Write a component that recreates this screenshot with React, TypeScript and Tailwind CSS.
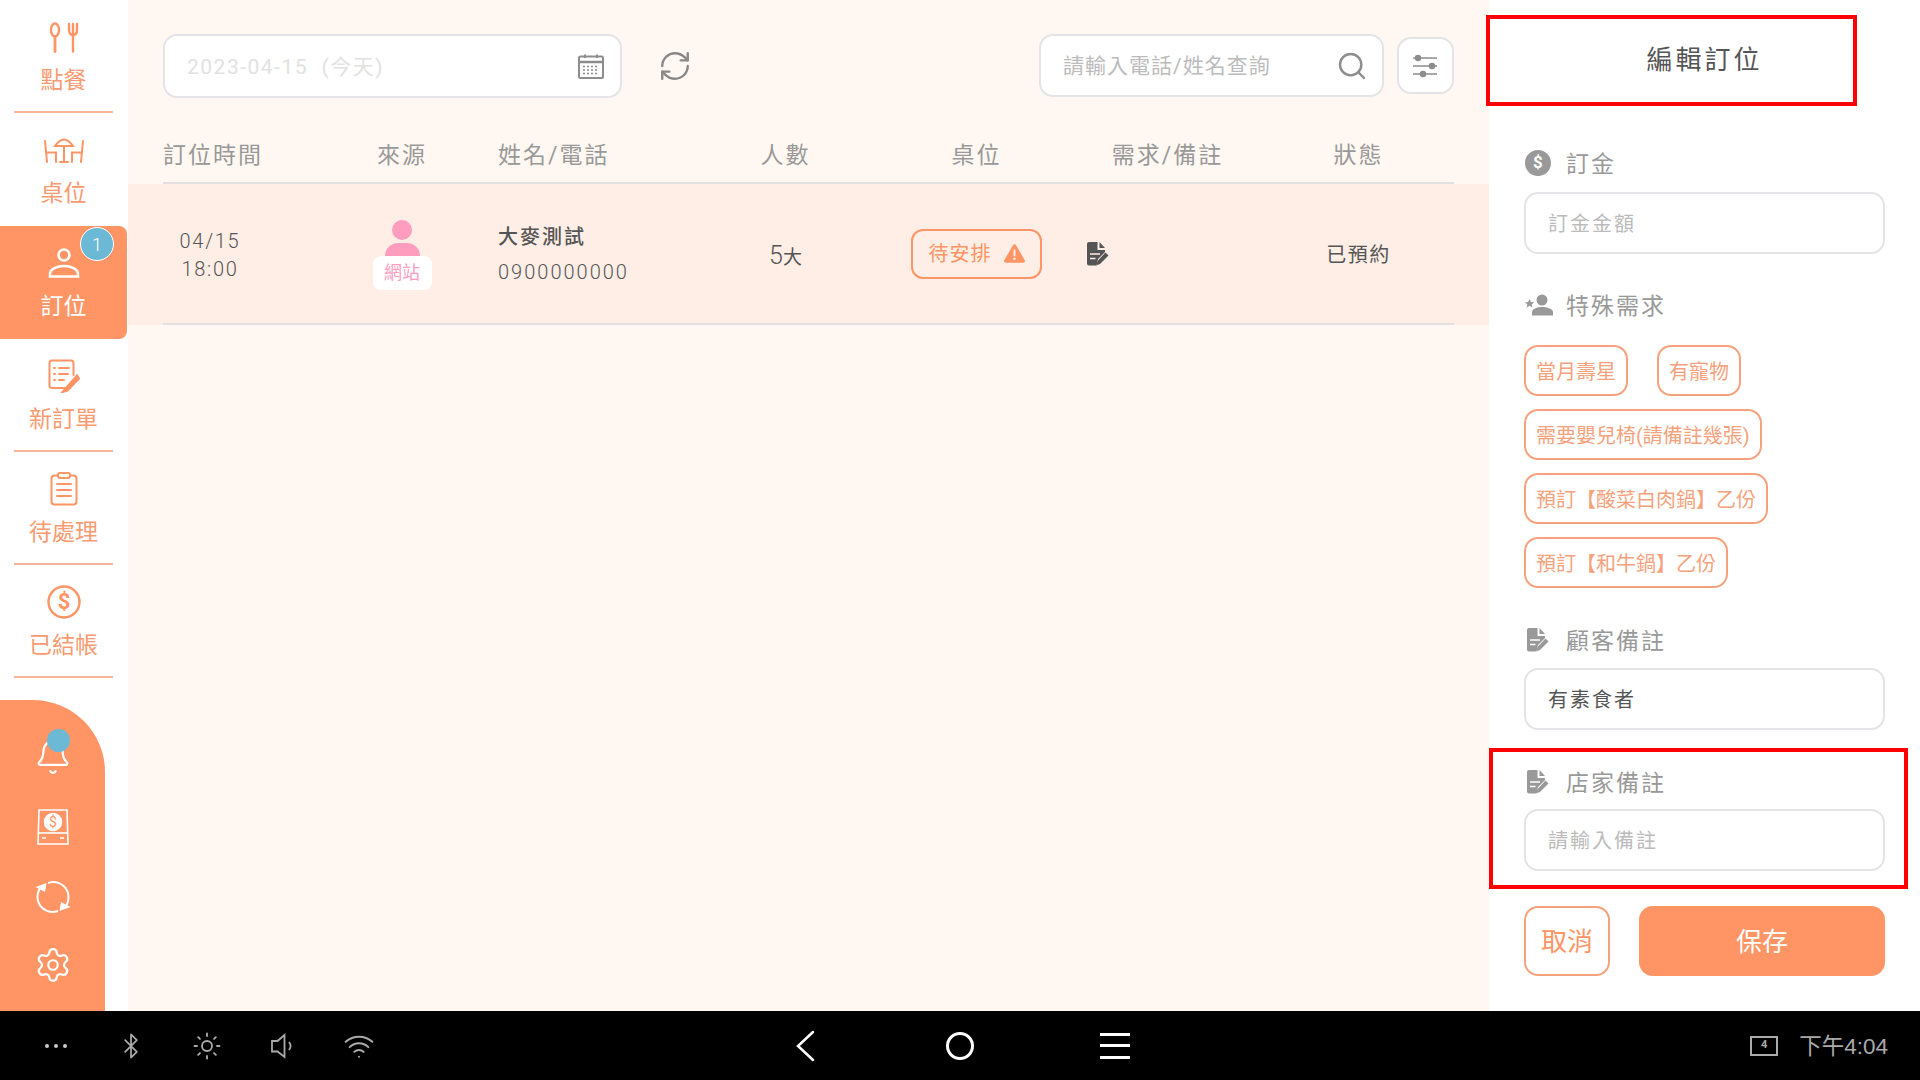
import { Bell, Bluetooth, RefreshCw, Search, Settings, Sun, Wifi } from "lucide-react";
import { FaTriangleExclamation } from "react-icons/fa6";
import type { ReactNode } from "react";

const FONT = "font-['Roboto','Noto_Sans_CJK_TC',sans-serif]";

function ForkSpoonIcon() {
  return (
    <svg width="30" height="31" viewBox="0 0 30 31" fill="none" stroke="#FF9464" strokeWidth="2.4" strokeLinecap="round">
      <ellipse cx="6" cy="8" rx="4" ry="6.5" />
      <path d="M6 14.5V29.5" strokeWidth="2.8" />
      <path d="M20 2V8C20 11 21.5 13 24 13C26.5 13 28 11 28 8V2M24 2V29.5" />
    </svg>
  );
}

function TableIcon() {
  return (
    <svg width="40" height="26" viewBox="0 0 40 26" fill="none" stroke="#FF9464" strokeWidth="2" strokeLinecap="round">
      <path d="M1 4L3 25M2.5 15.500H12V25" />
      <path d="M39 4L37 25M37.500 15.500H28V25" />
      <path d="M11 9Q20 -4 29 9Z" />
      <path d="M20 9V25M16 25H24" />
    </svg>
  );
}

function PersonIcon() {
  return (
    <svg width="32" height="30" viewBox="0 0 32 30" fill="none" stroke="#fff" strokeWidth="2.600">
      <circle cx="16" cy="7" r="5.500" />
      <path d="M2 28.500V26C2 21 9 18 16 18C23 18 30 21 30 26V28.500Z" />
    </svg>
  );
}

function NewOrderIcon() {
  return (
    <svg width="32" height="34" viewBox="0 0 32 34" fill="none" stroke="#FF9464" strokeWidth="2" strokeLinecap="round">
      <path d="M22 29H4C2.500 29 1.500 28 1.500 26.500V4C1.500 2.500 2.500 1.500 4 1.500H23C24.500 1.500 25.500 2.500 25.500 4V16" />
      <path d="M11 9H21M11 15H20M11 21H16" />
      <path d="M6 9H7M6 15H7M6 21H7" />
      <path d="M29 16.500L18 29L14.500 33L19.500 31.500L31 19.500Z" fill="#FF9464" />
    </svg>
  );
}

function ClipboardIcon() {
  return (
    <svg width="28" height="34" viewBox="0 0 28 34" fill="none" stroke="#FF9464" strokeWidth="2" strokeLinecap="round">
      <rect x="1.500" y="3.500" width="25" height="29" rx="3" />
      <rect x="8" y="1" width="12" height="5" rx="2" fill="#fff" />
      <path d="M7 12H21M7 18H21M7 24H21" />
    </svg>
  );
}

function DollarIcon() {
  return (
    <svg width="34" height="34" viewBox="0 0 34 34" fill="none">
      <circle cx="17" cy="17" r="15.500" stroke="#FF9464" strokeWidth="2.400" />
      <text x="17" y="24" textAnchor="middle" fontSize="22" fontWeight="700" fill="#FF9464" fontFamily="Roboto">
        $
      </text>
    </svg>
  );
}

function CashIcon() {
  return (
    <svg width="32" height="36" viewBox="0 0 32 36" fill="none" stroke="#fff" strokeWidth="1.600">
      <path d="M2 1H30L31 35H1Z" />
      <path d="M1 24H31" />
      <path d="M5 29H9M23 29H27" />
      <circle cx="16" cy="13" r="8.500" fill="#fff" />
      <text x="16" y="18" textAnchor="middle" fontSize="14" fill="#FF9464" stroke="none" fontFamily="Roboto">
        $
      </text>
    </svg>
  );
}

function SyncIcon() {
  return (
    <svg width="36" height="34" viewBox="0 0 36 34" fill="none" stroke="#fff" strokeWidth="2">
      <path d="M7 6C4 9 2.500 12.500 2.500 17C2.500 25 9 32 18 32C20 32 21.500 31.500 23 31" />
      <path d="M29 28C32.500 25 33.500 21 33.500 17C33.500 9 27 2 18 2C16 2 14.500 2.500 13 3" />
      <path d="M0.500 7L11.500 3L10 12Z" fill="#fff" stroke="none" />
      <path d="M35.500 27L24.500 31L26 22Z" fill="#fff" stroke="none" />
    </svg>
  );
}

function CalendarIcon() {
  return (
    <svg width="26" height="25" viewBox="0 0 26 25" fill="none" stroke="#8d8d8d" strokeWidth="2">
      <rect x="1" y="2.500" width="24" height="21.500" rx="1.500" />
      <path d="M1 8H25" strokeWidth="2.500" />
      <path d="M7 0.500V4M19 0.500V4" />
      <path d="M5 12.500H21M5 16H21M5 19.500H21" strokeDasharray="2 2" strokeWidth="1.500" />
    </svg>
  );
}

function SlidersIcon() {
  return (
    <svg width="26" height="24" viewBox="0 0 26 24" fill="none" stroke="#8d8d8d" strokeWidth="1.500">
      <path d="M1 4H25M1 12H25M1 20H25" />
      <circle cx="6" cy="4" r="2.500" fill="#8d8d8d" />
      <circle cx="20" cy="12" r="2.500" fill="#8d8d8d" />
      <circle cx="11" cy="20" r="2.500" fill="#8d8d8d" />
    </svg>
  );
}

function StarPersonIcon() {
  return (
    <svg width="28" height="22" viewBox="0 0 28 22" fill="#999">
      <circle cx="17" cy="6" r="5.500" />
      <path d="M7 21.500V18C7 15 12 13 17 13C22 13 28 15 28 18V21.500Z" />
      <path d="M4.500 5L5.900 8L9 8.300L6.700 10.400L7.400 13.500L4.500 11.800L1.600 13.500L2.300 10.400L0 8.300L3.100 8Z" />
    </svg>
  );
}

function NoteIcon({ color, line }: { color: string; line: string }) {
  return (
    <svg width="22" height="24" viewBox="0 0 22 24" fill={color}>
      <path d="M2 0H10.500V8H18V10L11 17L9.500 23.500H2A2 2 0 0 1 0 21.500V2A2 2 0 0 1 2 0Z" />
      <path d="M12.500 0L18 6H12.500Z" />
      <path d="M3 12H13M3 16.500H8.500" fill="none" stroke={line} strokeWidth="1.600" />
      <path d="M18.500 10.500L21.500 13.500L13 22L9.500 23.200L10.500 19Z" />
    </svg>
  );
}

function SpeakerIcon() {
  return (
    <svg className="ml-[49px]" width="24" height="26" viewBox="0 0 24 26" fill="none" stroke="#AAA" strokeWidth="1.800">
      <path d="M1 8H6.500L13.500 2V24L6.500 18.500H1Z" />
      <path d="M18 9C20 11.500 20 14.500 18 17" />
    </svg>
  );
}

function DepositIcon() {
  return (
    <div className="flex h-[26px] w-[26px] items-center justify-center rounded-full bg-[#999] text-[17px] font-bold text-white">
      $
    </div>
  );
}

function NavItem({ icon, label, active, divider }: { icon: ReactNode; label: string; active?: boolean; divider?: boolean }) {
  return (
    <div className={`relative h-[113px] w-[127px] ${active ? "rounded-r-lg bg-[#FF9464]" : ""}`}>
      <div className="flex h-[111px] flex-col items-center pt-[20px]">
        <div className="flex h-[34px] items-center justify-center">{icon}</div>
        <div className={`mt-[10px] text-[23px] leading-[34px] ${active ? "text-white" : "text-[#F99A70]"}`}>{label}</div>
      </div>
      {divider && <div className="mx-[14px] h-[2px] bg-[#F5B69A]" />}
      {active && (
        <div className="absolute left-[80px] top-[1px] flex h-[34px] w-[34px] items-center justify-center rounded-full border border-white bg-[#6CB9D6] text-[18px] font-light text-white">
          1
        </div>
      )}
    </div>
  );
}

function FieldLabel({ icon, text, className }: { icon: ReactNode; text: string; className?: string }) {
  return (
    <div className={`flex h-[30px] items-center ${className ?? ""}`}>
      <div className="flex w-[42px] items-center pl-[1px]">{icon}</div>
      <span className="pt-[4px] text-[23px] tracking-[2px] text-[#999]">{text}</span>
    </div>
  );
}

function Chip({ text }: { text: string }) {
  return (
    <div className="flex h-[51px] items-center rounded-[14px] border-2 border-[#F5A27C] px-[10px] pt-[2px] text-[20px] whitespace-nowrap text-[#F5A27C]">
      {text}
    </div>
  );
}

function Field({ text, filled, className }: { text: string; filled?: boolean; className?: string }) {
  return (
    <div
      className={`flex h-[62px] items-center rounded-[14px] border-2 border-[#E3E4E8] bg-white px-[22px] pt-[2px] text-[20px] tracking-[2px] ${
        filled ? "text-[#555]" : "text-[#BBB]"
      } ${className ?? ""}`}
    >
      {text}
    </div>
  );
}

const GRID = "grid grid-cols-[191px_96px_240px_191px_191px_191px_191px] items-center";

export default function App() {
  return (
    <div className={`relative flex h-[1080px] w-[1920px] flex-col overflow-hidden bg-white ${FONT}`}>
      <div className="flex h-[1011px]">
        {/* left nav */}
        <nav className="flex w-[128px] flex-col bg-white">
          <NavItem icon={<ForkSpoonIcon />} label="點餐" divider />
          <NavItem icon={<TableIcon />} label="桌位" />
          <NavItem icon={<PersonIcon />} label="訂位" active />
          <NavItem icon={<NewOrderIcon />} label="新訂單" divider />
          <NavItem icon={<ClipboardIcon />} label="待處理" divider />
          <NavItem icon={<DollarIcon />} label="已結帳" divider />
          <div className="mt-[22px] flex w-[105px] flex-1 flex-col items-center rounded-tr-[72px] bg-[#FF9464] pt-[22px]">
            <div className="relative flex h-[70px] items-center">
              <Bell size={38} strokeWidth={1.4} color="#fff" />
              <div className="absolute left-[13px] top-[7px] h-[23px] w-[23px] rounded-full bg-[#6CB9D6]" />
            </div>
            <div className="flex h-[70px] items-center">
              <CashIcon />
            </div>
            <div className="flex h-[70px] items-center">
              <SyncIcon />
            </div>
            <div className="flex h-[66px] items-center">
              <Settings size={38} strokeWidth={1.4} color="#fff" />
            </div>
          </div>
        </nav>

        {/* reservations list */}
        <main className="flex-1 bg-[#FFF8F2] px-[35px] pt-[34px]">
          <div className="flex h-[64px] items-start">
            <div className="flex h-[64px] w-[459px] items-center justify-between rounded-[14px] border-2 border-[#E3E4E8] bg-white pl-[22px] pr-[16px]">
              <span className="pt-[3px] text-[21px] tracking-[1.500px] text-[#E2E2E2]">2023-04-15&nbsp; (今天)</span>
              <CalendarIcon />
            </div>
            <div className="ml-[36px] mt-[15px]">
              <RefreshCw size={34} strokeWidth={1.7} color="#888" />
            </div>
            <div className="ml-auto flex h-[63px] w-[345px] items-center justify-between rounded-[14px] border-2 border-[#E3E4E8] bg-white pl-[22px] pr-[14px]">
              <span className="pt-[3px] text-[21px] tracking-[1px] text-[#BBB]">請輸入電話/姓名查詢</span>
              <Search size={32} strokeWidth={1.8} color="#8d8d8d" />
            </div>
            <div className="ml-[13px] mt-[3px] flex h-[57px] w-[57px] items-center justify-center rounded-[14px] border-2 border-[#E3E4E8] bg-white pr-[1px]">
              <SlidersIcon />
            </div>
          </div>

          <div className={`${GRID} h-[86px] border-b-2 border-[#E3E0E4] pt-[33px] text-[23px] tracking-[2px] text-[#999]`}>
            <div>訂位時間</div>
            <div className="text-center">來源</div>
            <div className="pl-[48px]">姓名/電話</div>
            <div className="text-center">人數</div>
            <div className="text-center">桌位</div>
            <div className="text-center">需求/備註</div>
            <div className="text-center">狀態</div>
          </div>

          <div className="-mx-[35px] bg-[#FFEEE5] px-[35px]">
            <div className={`${GRID} h-[141px] border-b-2 border-[#E3E0E4] pt-[2px] text-[#555]`}>
              <div className="w-[94px] text-center text-[20px] font-light leading-[28px] tracking-[1.700px]">
                <div>04/15</div>
                <div>18:00</div>
              </div>
              <div className="flex flex-col items-center">
                <div className="h-[20px] w-[20px] rounded-full bg-[#FF9DBF]" />
                <div className="mt-[3px] h-[13px] w-[35px] rounded-t-[14px] bg-[#FF9DBF]" />
                <div className="flex h-[34px] w-[59px] items-center justify-center rounded-[8px] bg-white text-[18px] text-[#FF9DBF]">
                  網站
                </div>
              </div>
              <div className="pl-[48px]">
                <div className="text-[20px] font-medium leading-[30px] tracking-[2px]">大麥測試</div>
                <div className="mt-[5px] text-[20px] font-light leading-[30px] tracking-[2px]">0900000000</div>
              </div>
              <div className="pt-[3px] text-center text-[25px] font-light">
                5<span className="text-[19px] font-normal">大</span>
              </div>
              <div className="flex justify-center">
                <div className="-mt-[2px] flex h-[50px] w-[131px] items-center justify-center gap-[12px] rounded-[12px] border-2 border-[#FF9464] text-[20px] tracking-[1px] text-[#FF9464]">
                  待安排
                  <FaTriangleExclamation size={21} color="#FF9464" />
                </div>
              </div>
              <div className="-mt-[2px] pl-[15px]">
                <NoteIcon color="#555" line="#FFEEE5" />
              </div>
              <div className="text-center text-[20px] tracking-[1.500px]">已預約</div>
            </div>
          </div>
        </main>

        {/* edit panel */}
        <aside className="w-[431px] bg-white px-[35px]">
          <div className="flex h-[118px] items-center justify-center pt-[2px] text-[26px] tracking-[3px] text-[#555]">編輯訂位</div>
          <FieldLabel className="mt-[30px]" icon={<DepositIcon />} text="訂金" />
          <Field className="mt-[14px]" text="訂金金額" />
          <FieldLabel className="mt-[36px]" icon={<StarPersonIcon />} text="特殊需求" />
          <div className="mt-[25px] flex flex-wrap gap-x-[29px] gap-y-[13px]">
            <Chip text="當月壽星" />
            <Chip text="有寵物" />
            <Chip text="需要嬰兒椅(請備註幾張)" />
            <Chip text="預訂【酸菜白肉鍋】乙份" />
            <Chip text="預訂【和牛鍋】乙份" />
          </div>
          <FieldLabel className="mt-[37px]" icon={<div className="pl-[2px]"><NoteIcon color="#999" line="#fff" /></div>} text="顧客備註" />
          <Field className="mt-[13px]" text="有素食者" filled />
          <FieldLabel className="mt-[37px]" icon={<div className="pl-[2px]"><NoteIcon color="#999" line="#fff" /></div>} text="店家備註" />
          <Field className="mt-[12px]" text="請輸入備註" />
          <div className="mt-[35px] flex gap-[29px]">
            <div className="flex h-[70px] w-[86px] items-center justify-center rounded-[14px] border-2 border-[#F5A27C] pt-[2px] text-[26px] text-[#FF9464]">
              取消
            </div>
            <div className="flex h-[70px] w-[246px] items-center justify-center rounded-[14px] bg-[#FF9464] pt-[2px] text-[26px] text-white">
              保存
            </div>
          </div>
        </aside>
      </div>

      {/* android system bar */}
      <footer className="relative flex h-[69px] items-center bg-black text-[#AAA]">
        <div className="flex w-[500px] items-center">
          <div className="ml-[45px] flex w-[22px] justify-between">
            <span className="h-[4px] w-[4px] rounded-full bg-[#ccc]" />
            <span className="h-[4px] w-[4px] rounded-full bg-[#ccc]" />
            <span className="h-[4px] w-[4px] rounded-full bg-[#ccc]" />
          </div>
          <Bluetooth className="ml-[50px]" size={28} strokeWidth={1.5} />
          <Sun className="ml-[47px]" size={30} strokeWidth={1.5} />
          <SpeakerIcon />
          <Wifi className="ml-[48px]" size={32} strokeWidth={1.5} />
        </div>
        <div className="absolute left-[796px] flex items-center">
          <svg width="20" height="32" viewBox="0 0 20 32" fill="none" stroke="#fff" strokeWidth="2.500" strokeLinecap="round">
            <path d="M17 2L2 16L17 30" />
          </svg>
          <div className="ml-[130px] h-[28px] w-[28px] rounded-full border-[3px] border-white" />
          <div className="ml-[126px] flex h-[26px] w-[30px] flex-col justify-between">
            <span className="h-[3px] bg-white" />
            <span className="h-[3px] bg-white" />
            <span className="h-[3px] bg-white" />
          </div>
        </div>
        <div className="ml-auto mr-[32px] flex items-center">
          <div className="mr-[21px] flex h-[20px] w-[28px] items-center justify-center border-2 border-[#AAA] text-[11px] font-bold">4</div>
          <span className="pt-[3px] font-['Liberation_Sans','Noto_Sans_CJK_TC',sans-serif] text-[22.500px]">下午4:04</span>
        </div>
      </footer>

      {/* red annotation boxes from the screenshot */}
      <div className="absolute left-[1486px] top-[15px] h-[91px] w-[371px] border-4 border-[#FF0000]" />
      <div className="absolute left-[1489px] top-[748px] h-[141px] w-[419px] border-4 border-[#FF0000]" />
    </div>
  );
}
